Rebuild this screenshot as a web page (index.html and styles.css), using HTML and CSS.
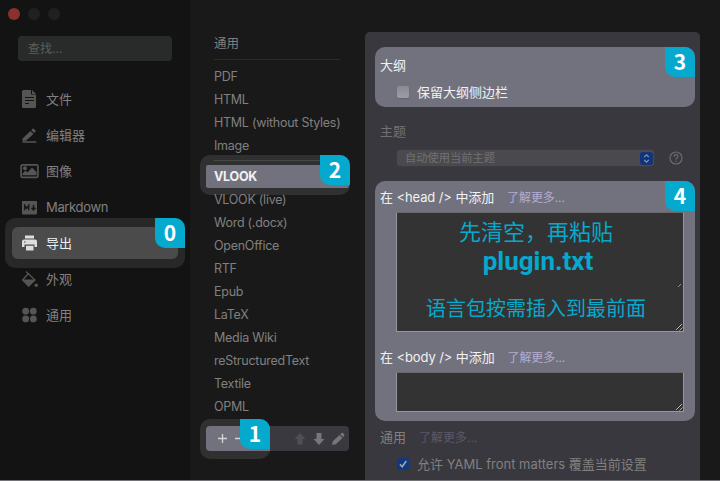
FILE: index.html
```html
<!DOCTYPE html>
<html lang="zh-CN">
<head>
<meta charset="utf-8">
<title>导出</title>
<link rel="stylesheet" href="styles.css">
</head>
<body>
<div class="window">
  <aside class="sidebar">
    <div class="lights"><i class="light close"></i><i class="light"></i><i class="light"></i></div>
    <div class="search">查找...</div>
    <nav class="nav">
      <div class="nav-item"><svg class="icon" viewBox="0 0 20 20"><path fill="currentColor" fill-rule="evenodd" d="M4 1h7v4.500h5V17.500a1.500 1.500 0 0 1-1.500 1.500H3.500A1.500 1.500 0 0 1 2 17.500v-15A1.500 1.500 0 0 1 3.500 1zM5 8v1h9V8zM5 11v1h9v-1zM5 14v1h4v-1z"/><path fill="currentColor" d="M12 1l4 4h-4z"/></svg><span>文件</span></div>
      <div class="nav-item"><svg class="icon" viewBox="0 0 20 20"><path fill="currentColor" d="M2.500 13.500L10.500 6l3 3L6 15.800 2.500 16zM11.300 5.200l1.300-1.500q.6-.5 1.200 0l1.700 1.700q.5.600 0 1.200l-1.200 1.500zM2.500 16.200h13.800v1.600H2.500z"/></svg><span>编辑器</span></div>
      <div class="nav-item"><svg class="icon" viewBox="0 0 20 20"><rect x="1.100" y="3.800" width="16.800" height="12.600" rx="1.500" fill="none" stroke="currentColor" stroke-width="1.700"/><circle cx="5" cy="7.300" r="2" fill="currentColor"/><path fill="currentColor" d="M2.500 14.200v-1.700l3-3 2 2L12 6.500l4.500 4.500v3.200z"/></svg><span>图像</span></div>
      <div class="nav-item"><svg class="icon" viewBox="0 0 20 20"><rect x="2" y="4" width="15" height="13.500" rx="1" fill="currentColor"/><path d="M4.700 13.300V8.500l2 2.800 2-2.800v4.800M13.500 7.800v4.700M11.500 10.800l2 2.200 2-2.200" fill="none" stroke="#181818" stroke-width="1.500"/></svg><span class="tight">Markdown</span></div>
      <div class="nav-item active"><svg class="icon" viewBox="0 0 20 20"><path fill="currentColor" fill-rule="evenodd" d="M5 2.500h9v3H5zM4 6.500h11a2 2 0 0 1 2 2V14h-2.500v-2.500h-10V14H2V8.500a2 2 0 0 1 2-2zM4 8.500v1h1.500v-1zM6 12.800h7.500v4.700H6z"/></svg><span>导出</span><b class="badge">0</b></div>
      <div class="nav-item"><svg class="icon" viewBox="0 0 20 20"><path d="M6 2.500l9 8.500-6.300 6L2.500 11l5.500-6" fill="none" stroke="currentColor" stroke-width="1.300"/><path fill="currentColor" d="M2.500 10.500H15l-6.300 7z"/><circle cx="16.200" cy="16.300" r="1.800" fill="currentColor"/></svg><span>外观</span></div>
      <div class="nav-item"><svg class="icon" viewBox="0 0 20 20" fill="currentColor"><circle cx="5.700" cy="6.200" r="3.400"/><circle cx="13.300" cy="6.200" r="3.400"/><circle cx="5.700" cy="13.900" r="3.400"/><circle cx="13.300" cy="13.900" r="3.400"/></svg><span>通用</span></div>
    </nav>
  </aside>

  <section class="formats">
    <div class="format general">通用</div>
    <div class="divider first"></div>
    <div class="format">PDF</div>
    <div class="format">HTML</div>
    <div class="format">HTML (without Styles)</div>
    <div class="format">Image</div>
    <div class="format selected"><span>VLOOK</span><b class="badge">2</b></div>
    <div class="format over">VLOOK (live)</div>
    <div class="format">Word (.docx)</div>
    <div class="format">OpenOffice</div>
    <div class="format">RTF</div>
    <div class="format">Epub</div>
    <div class="format">LaTeX</div>
    <div class="format">Media Wiki</div>
    <div class="format">reStructuredText</div>
    <div class="format">Textile</div>
    <div class="format">OPML</div>
    <div class="toolbar">
      <div class="add-remove">
        <svg width="34" height="25" viewBox="0 0 34 25"><path d="M12 12.500h9M16.500 8v9M29 12.500h9" stroke="#d4d4d6" stroke-width="1.300"/></svg>
        <b class="badge">1</b>
      </div>
      <div class="tools">
        <svg width="14" height="14" viewBox="0 0 14 14"><path fill="#505053" d="M7 1l5.500 6H9.500v5.500h-5V7h-3z"/></svg>
        <svg width="14" height="14" viewBox="0 0 14 14"><path fill="#77777a" d="M7 13l5.500-6H9.500V1h-5v6h-3z"/></svg>
        <svg width="14" height="14" viewBox="0 0 14 14"><path fill="#77777a" d="M1 13l.8-3.800L8.500 3l3 3L4.800 12.200zM9.200 2.300L10.500 1q.8-.6 1.500 0l1.200 1.200q.6.700 0 1.400L12.100 5.200z"/></svg>
      </div>
    </div>
  </section>

  <main class="panel">
    <div class="card outline">
      <div class="title">大纲</div>
      <div class="option"><i class="check"></i><span>保留大纲侧边栏</span></div>
      <b class="badge">3</b>
    </div>
    <div class="theme">
      <div class="title">主题</div>
      <div class="select-row">
        <div class="select"><span>自动使用当前主题</span><svg width="13" height="13" viewBox="0 0 13 13"><rect width="13" height="13" rx="3" fill="#10357c"/><path d="M4.200 5.200l2.300-2.300 2.300 2.300M4.200 7.900l2.300 2.300 2.300-2.300" fill="none" stroke="#8995ae" stroke-width="1.200"/></svg></div>
        <svg class="help" width="14" height="14" viewBox="0 0 14 14"><circle cx="7" cy="7" r="6" fill="none" stroke="#6c6c70" stroke-width="1.200"/><path d="M5.100 5.700C5 2.900 9 2.900 9 5.300 9 6.800 7.100 6.600 7.100 8.500M7.100 9.500v1.200" fill="none" stroke="#6c6c70" stroke-width="1.200"/></svg>
      </div>
    </div>
    <div class="card inject">
      <div class="title snug">在 &lt;head /&gt; 中添加<span class="more">了解更多...</span></div>
      <div class="area head-area">
        <div class="tip">先清空，再粘贴</div>
        <div class="file">plugin.txt</div>
        <div class="tip small">语言包按需插入到最前面</div>
        <svg class="inner-grip" width="4" height="3" viewBox="0 0 4 3"><path d="M0 3l3-3" stroke="#aaa" stroke-width=".8"/></svg>
        <svg class="grip" width="8" height="8" viewBox="0 0 8 8"><path d="M1 7l6-6M4.500 7.500l3-3" stroke="#b5b5b5"/></svg>
      </div>
      <div class="title second snug">在 &lt;body /&gt; 中添加<span class="more">了解更多...</span></div>
      <div class="area body-area">
        <svg class="grip" width="8" height="8" viewBox="0 0 8 8"><path d="M1 7l6-6M4.500 7.500l3-3" stroke="#b5b5b5"/></svg>
      </div>
      <b class="badge">4</b>
    </div>
    <div class="common">
      <div class="title">通用<span class="more">了解更多...</span></div>
      <div class="option"><svg class="tick" width="12" height="12" viewBox="0 0 12 12"><rect width="12" height="12" rx="2.500" fill="#10397f"/><path d="M3 6.300l2.200 2.500L9.300 3" fill="none" stroke="#a4a9b4" stroke-width="1.500"/></svg><span>允许 YAML front matters 覆盖当前设置</span></div>
    </div>
  </main>
</div>
</body>
</html>
```

FILE: styles.css
```css
* { box-sizing: border-box; }
body { margin: 0; background: #191919; }
svg { display: block; flex: none; }

.window {
  display: flex;
  width: 720px;
  height: 481px;
  overflow: hidden;
  border-bottom: 1px solid #737276;
  background: #191919;
  color: #808080;
  font: 13px/20px Inter, "Noto Sans CJK SC", sans-serif;
  white-space: nowrap;
}

.badge {
  position: absolute;
  top: 0;
  right: 0;
  z-index: 2;
  width: 30px;
  height: 30px;
  border-radius: 0 10px 0 10px;
  background: #06a9ce;
  color: #fff;
  font: bold 21px/29px "Noto Sans CJK SC", sans-serif;
  letter-spacing: 0;
  text-align: center;
}

/* Sidebar */
.sidebar { flex: none; width: 190px; padding: 8px 12px 0; background: #131313; }
.lights { display: flex; gap: 8px; margin-left: -4px; }
.light { width: 12px; height: 12px; border-radius: 50%; background: #202020; }
.light.close { background: #88312e; }
.search {
  width: 154px;
  height: 25px;
  margin: 16px 0 0 6px;
  padding-left: 10px;
  border-radius: 4px;
  background: #292b2a;
  color: #5d5e5d;
  font-size: 12px;
  line-height: 25px;
}
.nav { display: flex; flex-direction: column; gap: 4px; margin-top: 22px; }
.nav-item {
  position: relative;
  display: flex;
  align-items: center;
  gap: 6px;
  width: 166px;
  height: 32px;
  padding-left: 8px;
}
.icon { width: 20px; height: 20px; color: #555; }
.nav-item span, .nav-item .icon { z-index: 1; }
.tight { letter-spacing: -.35px; }
.active { z-index: 1; color: #eee; }
.active .icon { color: #ddd; }
.active::before {
  content: "";
  position: absolute;
  inset: -9px -7px;
  z-index: -1;
  border-radius: 10px;
  background: #282828;
}
.active::after {
  content: "";
  position: absolute;
  inset: 0;
  border-radius: 6px;
  background: #4b4b4b;
}
.active .badge { top: -9px; right: -7px; }

/* Export formats */
.formats { flex: none; width: 175px; padding: 32px 0 0 16px; }
.format {
  width: 143px;
  height: 23px;
  padding-left: 8px;
  font-size: 12.500px;
  line-height: 23px;
  letter-spacing: -.26px;
}
.general { letter-spacing: 0; }
.over { position: relative; z-index: 2; }
.divider { width: 126px; height: 1px; margin-left: 8px; background: #2b2b2b; }
.divider.first { margin-top: 4px; margin-bottom: 5px; }
.selected {
  position: relative;
  z-index: 1;
  margin-top: 8px;
  color: #f2f2f2;
  font-weight: bold;
}
.selected span { position: relative; z-index: 1; }
.selected::before {
  content: "";
  position: absolute;
  inset: -10px -1px -7px -6px;
  border-radius: 10px;
  background: linear-gradient(#494949, #494949) 14px 5px / 126px 1px no-repeat #303030;
}
.selected::after {
  content: "";
  position: absolute;
  inset: 0;
  border-radius: 2px;
  background: #72727e;
}
.selected .badge { top: -10px; right: -1px; }
.toolbar {
  display: flex;
  width: 143px;
  height: 25px;
  margin-top: 8px;
  border-radius: 4px;
  background: #3a393f;
}
.add-remove {
  position: relative;
  z-index: 0;
  width: 64px;
  border-radius: 4px 0 0 4px;
}
.add-remove::before {
  content: "";
  position: absolute;
  inset: -7px 0 -8px -6px;
  z-index: -2;
  border-radius: 10px;
  background: #303030;
}
.add-remove::after {
  content: "";
  position: absolute;
  inset: 0;
  z-index: -1;
  border-radius: 4px 0 0 4px;
  background: #72727e;
}
.add-remove .badge { top: -7px; }
.tools { display: flex; align-items: center; gap: 5px; margin-left: 23px; }

/* Settings */
.panel {
  flex: none;
  width: 335px;
  height: 448px;
  margin-top: 32px;
  padding: 15px 5px 0 10px;
  border-radius: 5px 5px 0 0;
  background: #39383e;
}
.card { position: relative; border-radius: 10px; background: #72727e; color: #f1f1f1; }
.outline { height: 60px; padding: 8px 5px; }
.title { height: 20px; }
.snug { letter-spacing: -.1px; }
.option { display: flex; align-items: center; height: 20px; }
.outline .option { margin: 7px 0 0 17px; gap: 8px; }
.check { width: 12px; height: 12px; border-radius: 2px; background: linear-gradient(#8a8a92, #9c9ca3); box-shadow: 0 1px 1px #62626c; }
.theme { height: 74px; padding: 14px 5px 0; color: #717174; }
.select-row { display: flex; align-items: center; height: 16px; margin: 9px 0 0 17px; }
.select {
  display: flex;
  align-items: center;
  justify-content: space-between;
  width: 257px;
  height: 16px;
  padding: 0 1px 0 8px;
  border-radius: 4px;
  background: #4a494e;
  box-shadow: 0 0 1px #5c5c60;
  font-size: 11.250px;
}
.help { margin-left: 15px; }
.inject { height: 240px; padding: 6px 5px 0; }
.more { margin-left: 13px; color: #b4acd3; font-size: 12px; }
.area {
  position: relative;
  width: 288px;
  margin-left: 16px;
  border: 1px solid #96969b;
  border-top-color: #68686a;
  background: #333;
  color: #06a9ce;
  text-align: center;
}
.head-area { height: 120px; margin-top: 5px; padding: 4px 8px 0 0; }
.body-area { height: 40px; margin-top: 5px; }
.second { margin-top: 15px; }
.tip { font-size: 22px; line-height: 30px; }
.file { font: bold 26px/30px Roboto, sans-serif; transform: translate(2px, -1px); }
.tip.small { margin-top: 17px; font-size: 20px; line-height: 30px; }
.grip { position: absolute; right: 0; bottom: 0; }
.inner-grip { position: absolute; right: 1px; bottom: 44px; }
.common { padding: 6px 5px 0; }
.common .more { color: #5b586b; }
.common .option { gap: 8px; margin: 7px 0 0 17px; }
```
